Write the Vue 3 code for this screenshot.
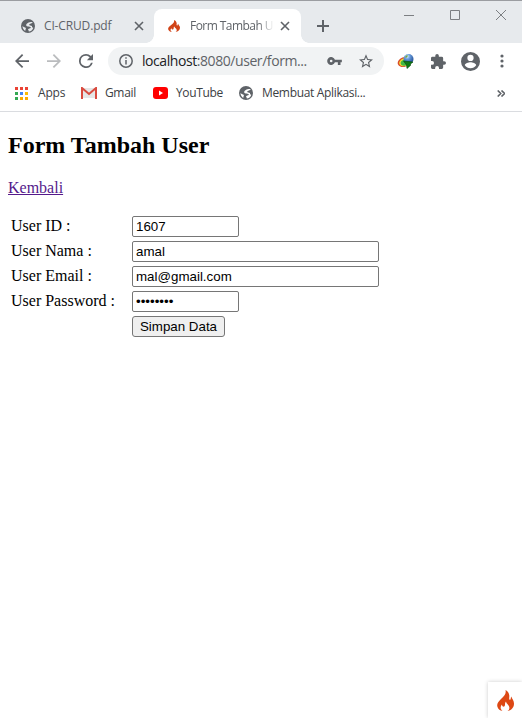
<script setup>
import { ref } from 'vue'

const flame = 'M8.500 0C9.500 4 7 6 4 9C1 12-.5 14 .5 17C1.200 19.200 3 20.500 5.500 21C3.200 19 3 16.500 5 14.500C5 16.200 6 17 7.200 16.500C8.800 15.500 7.200 13.500 9 11.500C9.300 14 12.500 15 12.400 18C12.300 19.500 11.500 20.500 10.500 21C14.500 20.300 17 17.500 17 13.500C17 10.500 15 9 14.300 6.500C13.500 8 14 9 13.200 9.800C11.500 9.800 12.500 7.500 12.300 5.500C12 3 10.800 1 8.500 0Z'
const land = 'M11.800 3.200C8.600 2.600 5 4.600 5.200 6.200C5.400 8.300 10.200 7 9.800 8.700C9.600 9.700 7 9.300 7 10.500C7 11.500 8.300 11.300 7.700 12.600C9.800 12.500 11.800 10.900 12.300 8.700C11.400 8.900 10.900 8 11 7C10 6.700 8.300 6.700 8.200 5.800C8.100 4.700 10.300 5 11.800 3.200ZM1.500 7C1.500 9 2.500 10.900 4.300 11.900C4.200 10.700 5.200 10 4.800 9C4.300 8 2.500 8.500 1.500 7Z'
const dots = [
  [0, 0, '#ea4335'], [5, 0, '#ea4335'], [10, 0, '#ea4335'],
  [0, 5, '#34a853'], [5, 5, '#4285f4'], [10, 5, '#fbbc04'],
  [0, 10, '#34a853'], [5, 10, '#f9ab00'], [10, 10, '#f9ab00'],
]
const fields = ref([
  { label: 'User ID :', value: '1607', type: 'text', wide: false },
  { label: 'User Nama :', value: 'amal', type: 'text', wide: true },
  { label: 'User Email :', value: 'mal@gmail.com', type: 'text', wide: true },
  { label: 'User Password :', value: 'password', type: 'password', wide: false },
])
</script>

<template>
  <div class="window">
    <header class="tabstrip">
      <div class="tab inactive">
        <svg class="globe" viewBox="0 0 14 14"><circle cx="7" cy="7" r="7" /><path :d="land" fill="#e7eaed" /></svg>
        <span class="title-one">CI-CRUD.pdf</span>
        <svg class="close" viewBox="0 0 10 10"><path d="M1 1l8 8M9 1L1 9" /></svg>
      </div>
      <div class="tab active">
        <svg class="fav" viewBox="0 0 17 21" preserveAspectRatio="none"><path :d="flame" /></svg>
        <span class="title-two">Form Tambah U</span>
        <svg class="close" viewBox="0 0 10 10"><path d="M1 1l8 8M9 1L1 9" /></svg>
      </div>
      <svg class="plus" viewBox="0 0 12 12"><path d="M6 0v12M0 6h12" /></svg>
      <div class="controls">
        <svg width="10" height="10" viewBox="0 0 10 10"><path d="M0 5.500h10" /></svg>
        <svg width="10" height="10" viewBox="0 0 10 10"><path d="M.5.5h9v9h-9z" /></svg>
        <svg width="10" height="10" viewBox="0 0 10 10"><path d="M0 0l10 10M10 0L0 10" /></svg>
      </div>
    </header>
    <div class="toolbar">
      <svg class="nav back" viewBox="4 4 16 16"><path d="M20 11H7.830l5.590-5.590L12 4l-8 8 8 8 1.410-1.410L7.830 13H20z" /></svg>
      <svg class="nav forward" viewBox="4 4 16 16"><path d="M12 4l-1.410 1.410L16.170 11H4v2h12.170l-5.580 5.590L12 20l8-8z" /></svg>
      <svg class="nav reload" viewBox="4 4 16 16"><path d="M17.650 6.350A7.960 7.960 0 0 0 12 4a8 8 0 1 0 7.730 10h-2.080A6 6 0 1 1 12 6c1.660 0 3.140.69 4.220 1.780L13 11h7V4z" /></svg>
      <div class="address">
        <svg class="info" viewBox="0 0 14 14"><circle cx="7" cy="7" r="6.200" /><path d="M7 6v4.500M7 3.300v1.500" /></svg>
        <span class="url">localhost<i>:8080/user/form...</i></span>
        <svg class="key" viewBox="1 6 22 12"><path d="M12.650 10A6 6 0 1 0 12.650 14H17v4h4v-4h2v-4zM7 14a2 2 0 1 1 0-4 2 2 0 0 1 0 4z" /></svg>
        <svg class="star" viewBox="2 2 20 19"><path d="M22 9.240l-7.190-.62L12 2 9.190 8.630 2 9.240l5.460 4.730L5.820 21 12 17.270 18.180 21l-1.630-7.030zM12 15.400l-3.760 2.270 1-4.280-3.320-2.880 4.380-.38L12 6.100l1.710 4.040 4.380.38-3.320 2.880 1 4.280z" /></svg>
      </div>
      <svg class="idm" viewBox="0 0 17 16">
        <defs>
          <radialGradient id="earth" cx=".38" cy=".25" r=".8"><stop stop-color="#d7efff" /><stop offset=".35" stop-color="#669ad9" /><stop offset="1" stop-color="#173f89" /></radialGradient>
        </defs>
        <ellipse cx="7" cy="9" rx="6.500" ry="4.700" fill="#d94a2a" transform="rotate(-20 7 9)" />
        <ellipse cx="7.500" cy="9.200" rx="5.500" ry="3.900" fill="#f5e22f" transform="rotate(-20 7.500 9.200)" />
        <ellipse cx="8" cy="9.500" rx="4.500" ry="3" fill="#43b743" transform="rotate(-20 8 9.500)" />
        <circle cx="11.500" cy="6" r="5" fill="url(#earth)" />
        <path d="M8 4l2-2 1 1-2 2z" fill="#75a83b" />
        <path d="M6.500 8l9.500 1-2.500 2v1.500L10 15.500 9.500 12z" fill="#107b13" stroke="#064b0a" stroke-width=".6" />
      </svg>
      <svg class="puzzle" viewBox="2 1 21 21"><path d="M20.500 11H19V7a2 2 0 0 0-2-2h-4V3.500a2.500 2.500 0 0 0-5 0V5H4a2 2 0 0 0-2 2v3.800h1.500a2.700 2.700 0 0 1 0 5.400H2V20a2 2 0 0 0 2 2h3.800v-1.500a2.700 2.700 0 0 1 5.400 0V22H17a2 2 0 0 0 2-2v-4h1.500a2.500 2.500 0 0 0 0-5z" /></svg>
      <svg class="person" viewBox="2 2 20 20"><path d="M12 2a10 10 0 1 0 0 20 10 10 0 0 0 0-20zm0 3a3.300 3.300 0 1 1 0 6.600A3.300 3.300 0 0 1 12 5zm0 14.200a7.200 7.200 0 0 1-6-3.220c.03-1.990 4-3.080 6-3.080s5.970 1.090 6 3.080a7.200 7.200 0 0 1-6 3.220z" /></svg>
      <svg class="more" viewBox="0 0 4 14"><circle cx="2" cy="2" r="1.600" /><circle cx="2" cy="7" r="1.600" /><circle cx="2" cy="12" r="1.600" /></svg>
    </div>
    <nav class="bookmarks">
      <svg class="apps" viewBox="0 0 13 13"><rect v-for="d in dots" :key="d[0] + '-' + d[1]" :x="d[0]" :y="d[1]" width="3" height="3" :fill="d[2]" /></svg>
      <span class="b-apps">Apps</span>
      <svg class="mail" viewBox="0 0 16 12"><path d="M1 1h14v10H1z" fill="#e6e6e6" /><path d="M1 12V1l7 6 7-6v11" fill="none" stroke="#d94b3f" stroke-width="2" /></svg>
      <span class="b-gmail">Gmail</span>
      <svg class="yt" viewBox="0 0 15 12"><rect width="15" height="12" rx="3" fill="red" /><path d="M6 3.500v5L10 6z" fill="#fff" /></svg>
      <span class="b-youtube">YouTube</span>
      <svg class="globe" viewBox="0 0 14 14"><circle cx="7" cy="7" r="7" /><path :d="land" fill="#fff" /></svg>
      <span class="b-last">Membuat Aplikasi...</span>
      <svg class="chevrons" viewBox="0 0 8 7"><path d="M.7.5l3 3-3 3M4.500.5l3 3-3 3" /></svg>
    </nav>
    <main class="page">
      <h2>Form Tambah User</h2>
      <a href="#">Kembali</a>
      <form @submit.prevent>
        <template v-for="f in fields" :key="f.label">
          <label>{{ f.label }}</label>
          <input v-model="f.value" :type="f.type" :class="{ wide: f.wide }">
        </template>
        <button type="submit">Simpan Data</button>
      </form>
    </main>
    <div class="debug"><svg viewBox="0 0 17 21"><path :d="flame" /></svg></div>
  </div>
</template>

<style>
body { background: #fff; overflow: hidden; }
</style>
<style scoped>
* { box-sizing: border-box; }
.window { position: relative; height: 718px; background: #fff; overflow: hidden; }
svg { display: block; flex: none; fill: #5f6368; }
.tabstrip { height: 43px; border-top: 1px solid #9b9da1; background: #e7eaed; display: flex; align-items: flex-end; font: 12px "Open Sans", sans-serif; color: #5f6368; }
.tab { display: flex; align-items: center; height: 34px; }
span { white-space: nowrap; line-height: 18px; flex: none; }
.inactive { width: 154px; padding-left: 21px; position: relative; }
.active { width: 147px; padding-left: 14px; background: #fff; border-radius: 8px 8px 0 0; position: relative; }
.active::before, .active::after { content: ""; position: absolute; bottom: 0; width: 8px; height: 8px; }
.active::before { left: -8px; background: radial-gradient(circle at 0 0, transparent 7.5px, #fff 8px); }
.active::after { right: -8px; background: radial-gradient(circle at 8px 0, transparent 7.5px, #fff 8px); }
.globe { width: 14px; height: 14px; }
.title-one { width: 92px; margin-left: 9px; letter-spacing: -.15px; }
.close { width: 10px; height: 10px; margin-left: -2px; }
.close path { stroke: #5f6368; stroke-width: 1.6; }
.fav { width: 12px; height: 12px; fill: #d14317; }
.title-two { width: 83px; margin-left: 10px; letter-spacing: -.55px; -webkit-mask-image: linear-gradient(90deg, #000 68px, transparent 84px); mask-image: linear-gradient(90deg, #000 68px, transparent 84px); }
.active .close { margin-left: 7px; }
.plus { width: 12px; height: 12px; margin: 0 0 11px 16px; }
.plus path { stroke: #5f6368; stroke-width: 2; }
.controls { display: flex; gap: 36px; margin: 9px 0 0 75px; align-self: flex-start; }
.controls path { fill: none; stroke: #7c7f82; stroke-width: 1; }
.toolbar { height: 37px; padding-bottom: 1px; display: flex; align-items: center; }
.nav { width: 14px; height: 14px; }
.back { margin-left: 15px; }
.forward { margin-left: 18px; fill: #babcbe; }
.reload { margin-left: 18px; }
.address { width: 276px; height: 28px; margin-left: 15px; padding-left: 11px; border-radius: 14px; background: #f1f3f4; display: flex; align-items: center; }
.info { width: 14px; height: 14px; }
.info circle, .info path { fill: none; stroke: #5f6368; stroke-width: 1.5; }
.url { width: 169px; margin-left: 9px; font: 14px/20px "Open Sans", sans-serif; letter-spacing: -.43px; color: #202124; }
.url i { font-style: normal; color: #5f6368; }
.key { width: 15px; height: 8px; margin-left: 16px; }
.star { width: 14px; height: 14px; margin-left: 17px; }
.idm { width: 17px; height: 16px; margin-left: 13px; }
.puzzle { width: 15px; height: 15px; margin-left: 17px; }
.person { width: 19px; height: 19px; margin-left: 15px; }
.more { width: 4px; height: 14px; margin-left: 20px; }
.bookmarks { height: 32px; border-bottom: 1px solid #dadce0; padding: 0 17px 5px 15px; display: flex; align-items: center; font: 12px "Open Sans", sans-serif; color: #3c4043; }
.apps { width: 13px; height: 13px; }
.b-apps { width: 43px; margin-left: 10px; letter-spacing: -.2px; }
.mail { width: 16px; height: 12px; }
.b-gmail { width: 48px; margin-left: 8px; letter-spacing: -.35px; }
.yt { width: 15px; height: 12px; }
.b-youtube { width: 63px; margin-left: 8px; letter-spacing: -.35px; }
.b-last { margin-left: 9px; letter-spacing: -.33px; }
.chevrons { width: 8px; height: 7px; margin-left: auto; }
.chevrons path { fill: none; stroke: #5f6368; stroke-width: 1.6; }
.page { padding: 20px 8px; font: 16px/18px "Liberation Serif", serif; color: #000; }
h2 { margin: 0 0 20px; font-size: 24px; line-height: 27px; font-weight: bold; }
a { display: block; width: max-content; color: #551a8b; text-decoration: underline; }
form { display: grid; grid-template-columns: 121px max-content; grid-auto-rows: 21px; row-gap: 4px; margin: 19px 0 0 3px; align-items: center; }
label { padding-bottom: 2px; }
input { width: 107px; height: 21px; border: 1px solid #767676; border-radius: 2px; padding: 1px 3px; background: #fff; color: #000; font: 13.333px "Liberation Sans", sans-serif; outline: 0; }
.wide { width: 247px; }
input[type="password"] { letter-spacing: 0; }
button { grid-column: 2; width: 93px; height: 21px; padding: 0; border: 1px solid #767676; border-radius: 3px; background: #efefef; color: #000; font: 13.333px "Liberation Sans", sans-serif; white-space: nowrap; }
.debug { position: absolute; right: 0; bottom: 0; width: 34px; height: 36px; padding: 8px 0 0 9px; background: #fff; box-shadow: 0 0 4px #ccc; }
.debug svg { width: 17px; height: 21px; fill: #dd4814; }
</style>
